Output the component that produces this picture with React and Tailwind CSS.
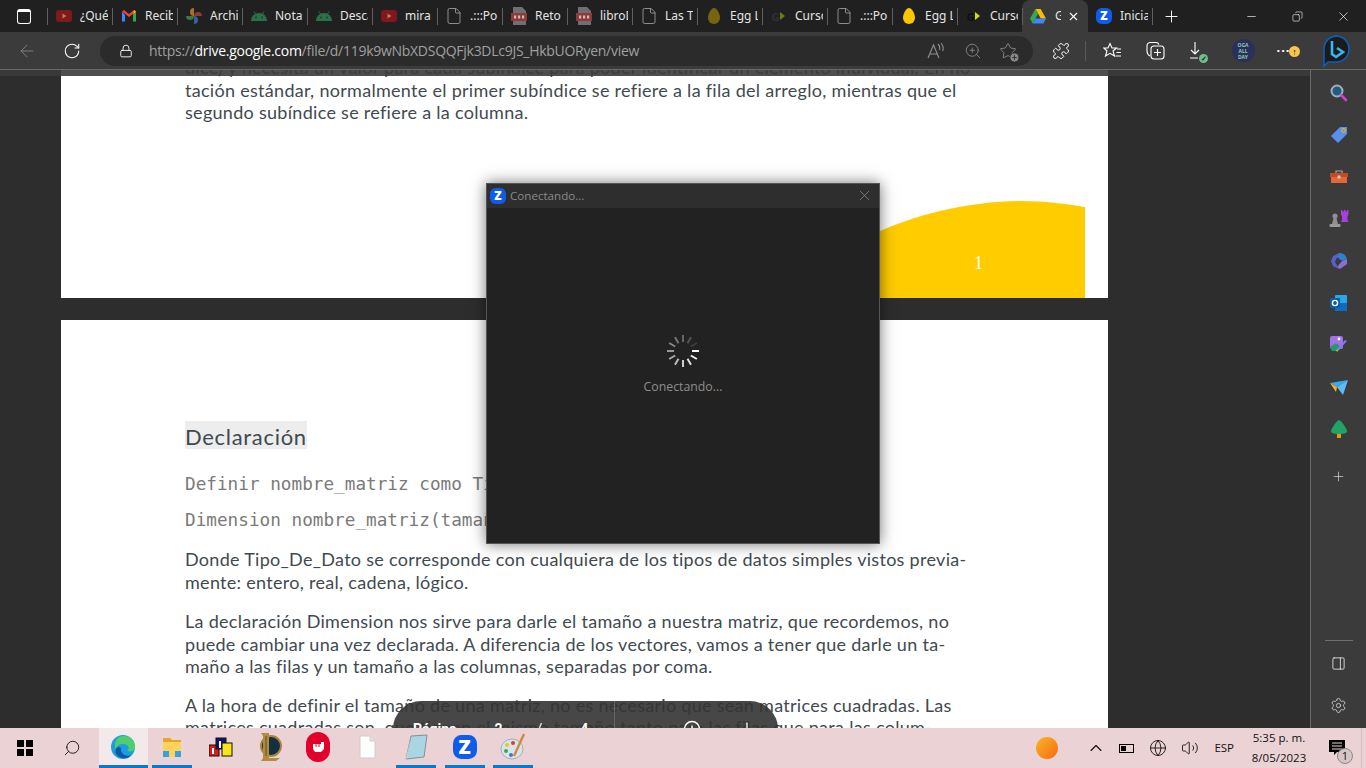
import React from 'react';
import {
  ArrowLeft, RotateCw, Lock, ZoomIn, Plus, X, Minus, Copy, Search, Puzzle, Settings,
  PanelRight, ChevronUp, Globe, Volume2, File, Star, PlusCircle,
} from 'lucide-react';

const YouTube = () => (
  <svg width="16" height="16" viewBox="0 0 16 16">
    <rect x="0" y="2" width="16" height="12" rx="3" fill="#7e1a1c" />
    <path d="M6.5 5.5 L10.5 8 L6.5 10.5 Z" fill="#c9706f" />
  </svg>
);
const Gmail = () => (
  <svg width="16" height="16" viewBox="0 0 16 16" fill="none">
    <path d="M1 3.5V13.5H4V7Z" fill="#4285f4" />
    <path d="M15 3.5V13.5H12V7Z" fill="#34a853" />
    <path d="M1 3.5 L8 9 L15 3.5 L13 2 L8 6 L3 2 Z" fill="#ea4335" />
    <path d="M13 2 L15 3.5 L12 7Z" fill="#fbbc04" />
  </svg>
);
const Photos = () => (
  <svg width="16" height="16" viewBox="0 0 16 16">
    <path d="M8 8 A4 4 0 0 1 8 0 Z" fill="#a9702a" />
    <path d="M8 8 A4 4 0 0 1 16 8 Z" fill="#8f3a30" />
    <path d="M8 8 A4 4 0 0 1 8 16 Z" fill="#34609c" />
    <path d="M8 8 A4 4 0 0 1 0 8 Z" fill="#37794a" />
  </svg>
);
const Android = () => (
  <svg width="18" height="16" viewBox="0 0 18 16">
    <path d="M1 13a8 8 0 0 1 16 0Z" fill="#2c7049" />
    <path d="M4 3.5 L5.8 6.5 M14 3.5 L12.2 6.5" stroke="#2c7049" strokeWidth="1" />
    <circle cx="6" cy="9.5" r="0.9" fill="#1d3a2a" />
    <circle cx="12" cy="9.5" r="0.9" fill="#1d3a2a" />
  </svg>
);
const Pdf = () => (
  <svg width="16" height="18" viewBox="0 0 16 18">
    <path d="M2 0H11L15 4V18H2Z" fill="#6f6f6f" />
    <rect x="0" y="6" width="16" height="8" fill="#8e3a3a" />
    <rect x="3" y="8.5" width="2.2" height="3" fill="#d7b5b5" />
    <rect x="7" y="8.5" width="2.2" height="3" fill="#d7b5b5" />
    <rect x="11" y="8.5" width="2.2" height="3" fill="#d7b5b5" />
  </svg>
);
const Egg = ({ dim }) => (
  <svg width="12" height="16" viewBox="0 0 12 16">
    <path d="M6 0C9 0 12 6 12 10A6 6 0 0 1 0 10C0 6 3 0 6 0Z" fill={dim ? '#75650f' : '#f7c800'} />
  </svg>
);
const Chevron = ({ dim }) => (
  <span className="flex items-center">
    <span className={`text-[11px] font-bold leading-none ${dim ? 'text-[#333]' : 'text-[#111]'}`}>G</span>
    <svg width="7" height="10" viewBox="0 0 7 10">
      <path d="M1 1 L6 5 L1 9 Z" fill={dim ? '#6f7a1a' : '#c6e01e'} />
    </svg>
  </span>
);
const Drive = () => (
  <svg width="16" height="15" viewBox="0 0 16 15">
    <path d="M5.4 0H10.6L16 9.5H10.8Z" fill="#fbbc04" />
    <path d="M5.4 0L0 9.5L2.6 14.5L8 5Z" fill="#34a853" />
    <path d="M5.3 9.5H16L13.4 14.5H2.6Z" fill="#4285f4" />
  </svg>
);
const ZoomLogo = ({ size = 16, text = 'text-[12px]' }) => (
  <span
    className={`flex items-center justify-center rounded-[35%] bg-[#0f5bea] text-white font-black leading-none ${text}`}
    style={{ width: size, height: size }}
  >
    Z
  </span>
);
const Doc = () => <File size={18} strokeWidth={1.2} className="text-[#9a9a9a]" />;

const tabs = [
  { icon: <YouTube />, label: '¿Qué' },
  { icon: <Gmail />, label: 'Recib' },
  { icon: <Photos />, label: 'Archi' },
  { icon: <Android />, label: 'Notas' },
  { icon: <Android />, label: 'Desca' },
  { icon: <YouTube />, label: 'mira d' },
  { icon: <Doc />, label: '.:::Por' },
  { icon: <Pdf />, label: 'Reto' },
  { icon: <Pdf />, label: 'libroD' },
  { icon: <Doc />, label: 'Las Tr' },
  { icon: <Egg dim />, label: 'Egg L' },
  { icon: <Chevron dim />, label: 'Curso' },
  { icon: <Doc />, label: '.:::Por' },
  { icon: <Egg />, label: 'Egg L' },
  { icon: <Chevron />, label: 'Curso' },
];

const Tab = ({ icon, label }) => (
  <div className="w-[65px] h-full flex items-center shrink-0 relative">
    <div className="w-[32px] flex justify-center shrink-0">{icon}</div>
    <span className="w-[28px] overflow-hidden whitespace-nowrap text-[12px] text-[#e4e4e4]">{label}</span>
    <div className="ml-auto w-px h-[17px] bg-[#5f5f5f]" />
  </div>
);

const TabBar = () => (
  <div className="h-[32px] bg-[#202020] flex items-stretch shrink-0">
    <div className="w-[47px] flex items-center justify-center">
      <div className="w-[14px] h-[15px] rounded-[3px] border-[1.5px] border-white border-t-[3px]" />
    </div>
    <div className="w-px h-[17px] self-center bg-[#5f5f5f]" />
    {tabs.map((t, i) => (
      <Tab key={i} icon={t.icon} label={t.label} />
    ))}
    <div className="w-[66px] -ml-px h-full bg-[#3b3b3b] rounded-t-lg flex items-center shrink-0">
      <div className="w-[31px] flex justify-center"><Drive /></div>
      <span className="ml-[2px] w-[6px] overflow-hidden text-[12px] text-[#e4e4e4]">G</span>
      <X size={13} className="ml-[6px] text-white" />
    </div>
    <Tab icon={<ZoomLogo />} label="Inicia" />
    <div className="w-[36px] flex items-center justify-center">
      <Plus size={19} strokeWidth={1.2} className="text-white" />
    </div>
    <div className="ml-auto flex">
      <div className="w-[46px] flex items-center justify-center"><Minus size={13} strokeWidth={1.2} className="text-white" /></div>
      <div className="w-[46px] flex items-center justify-center"><Copy size={11} strokeWidth={1.3} className="text-white -scale-x-100" /></div>
      <div className="w-[46px] flex items-center justify-center"><X size={15} strokeWidth={1.1} className="text-white" /></div>
    </div>
  </div>
);

const Badge = ({ bg, children }) => (
  <span className={`absolute -right-[3px] -bottom-[3px] w-[9px] h-[9px] rounded-full ${bg} flex items-center justify-center text-[7px] leading-none text-[#222] font-bold`}>
    {children}
  </span>
);

const ToolBar = () => (
  <div className="h-[38px] bg-[#3b3b3b] border-b border-[#6a6a6a] flex items-center shrink-0">
    <div className="w-[100px] flex items-center shrink-0 pl-[17px]">
      <ArrowLeft size={20} strokeWidth={1} className="text-[#8b8b8b]" />
      <RotateCw size={18} strokeWidth={1.4} className="ml-[26px] text-white" />
    </div>
    <div className="w-[933px] h-[30px] rounded-full bg-[#2b2b2b] flex items-center shrink-0">
      <Lock size={14} strokeWidth={1.5} className="ml-[19px] text-white" />
      <span className="ml-[16px] text-[14px] text-[#a0a0a0] whitespace-nowrap font-['Open_Sans',sans-serif] tracking-[-0.28px]">
        https://<span className="text-white">drive.google.com</span>/file/d/119k9wNbXDSQQFjk3DLc9JS_HkbUORyen/view
      </span>
      <div className="ml-auto flex items-center pr-[12px] text-[#8f8f8f]">
        <svg width="18" height="18" viewBox="0 0 18 18" fill="none" stroke="currentColor" strokeWidth="1.1">
          <path d="M1 16L6.5 3L12 16M3 12H10" />
          <path d="M11 2C13 4 13 6 12.6 8M14 1C16.5 4 16.5 7 15.6 9" />
        </svg>
        <ZoomIn size={18} strokeWidth={1.1} className="ml-[19px]" />
        <div className="relative ml-[17px] mr-[4px]">
          <Star size={18} strokeWidth={1.2} />
          <PlusCircle size={11} className="absolute -right-[3px] -bottom-[3px] fill-[#888] text-[#2b2b2b]" />
        </div>
      </div>
    </div>
    <div className="flex items-center text-white">
      <div className="w-[56px] flex justify-center"><Puzzle size={18} strokeWidth={1.3} /></div>
      <div className="w-[1px] h-[20px] -ml-[4px] bg-[#5a5a5a]" />
      <div className="w-[52px] flex justify-center">
        <svg width="19" height="17" viewBox="0 0 19 17" fill="none" stroke="#fff" strokeWidth="1.1">
          <path d="M7 1.5L9 6H13.5L10 9L11.5 14L7 11.3L2.5 14L4 9L.8 6H5Z" />
          <path d="M14 7H18M13.5 10.5H18M12.5 14H18" />
        </svg>
      </div>
      <div className="w-[34px] flex justify-center">
        <svg width="19" height="19" viewBox="0 0 19 19" fill="none" stroke="#fff" strokeWidth="1.1">
          <path d="M4 15C2 14 1 12 1 10V5C1 3 2.5 1.5 4.5 1.5H10C11.5 1.5 12.5 2.3 13 3.5" />
          <rect x="5" y="5" width="13" height="13" rx="3" />
          <path d="M11.5 8V15M8 11.5H15" />
        </svg>
      </div>
      <div className="w-[50px] flex justify-center">
        <div className="relative">
          <svg width="16" height="18" viewBox="0 0 16 18" fill="none" stroke="#fff" strokeWidth="1.1">
            <path d="M6 0V12M2 8L6 12L10 8M1 16H9" />
          </svg>
          <Badge bg="bg-[#6fbf8a]">✓</Badge>
        </div>
      </div>
      <div className="w-[42px] flex justify-center">
        <div className="w-[23px] h-[23px] rounded-full bg-[#2b2f5c] flex flex-col items-center justify-center text-[5px] leading-[6px] font-bold text-[#8fc7a8]">
          <span>OGA</span>
          <span>ALL</span>
          <span>DAY</span>
        </div>
      </div>
      <div className="w-[44px] flex justify-center">
        <div className="relative text-[13px] leading-none font-bold tracking-[1px] -mt-[6px] pr-[5px]">
          ...
          <span className="absolute -right-[5px] top-[5px] w-[11px] h-[11px] rounded-full bg-[#f5c451] text-[#222] text-[9px] leading-[11px] text-center">↑</span>
        </div>
      </div>
      <div className="w-[56px] flex justify-center">
        <svg width="30" height="34" viewBox="0 0 30 34" fill="none">
          <path d="M15 2a13 13 0 0 1 0 26H7L3 32V15A13 13 0 0 1 15 2Z" stroke="#0d5fb8" strokeWidth="1.6" fill="#1b1b1b" />
          <path d="M11 7V20L15 23L22 18L16 14" stroke="#38b6f2" strokeWidth="2.6" fill="none" />
        </svg>
      </div>
    </div>
  </div>
);

const Line = ({ children }) => <span className="block whitespace-nowrap">{children}</span>;

const Para = ({ lines, className = '' }) => (
  <p className={`mb-[17px] ${className}`}>
    {lines.map((l, i) => (
      <Line key={i}>{l}</Line>
    ))}
  </p>
);

const bodyText = "text-[18px] leading-[22.5px] tracking-[0.29px] text-[#3f4a50] font-['Lato',sans-serif]";

const PageOne = () => (
  <div className={`relative w-[1047px] h-[242px] -mt-[14px] ml-[61px] bg-white pl-[124px] ${bodyText}`}>
    <Para
      lines={[
        'dice) y necesita un valor para cada subíndice para poder identificar un elemento individual. En no-',
        'tación estándar, normalmente el primer subíndice se refiere a la fila del arreglo, mientras que el',
        'segundo subíndice se refiere a la columna.',
      ]}
    />
    <svg className="absolute right-[23px] bottom-0" width="240" height="97" viewBox="0 0 240 97">
      <path d="M0 48C60 12 130 0 175 0C200 0 222 3 240 6V97H0Z" fill="#ffcc00" />
    </svg>
    <span className="absolute left-[913px] bottom-[26px] text-[18px] leading-none tracking-normal text-white font-['Liberation_Serif',serif]">1</span>
  </div>
);

const PageTwo = () => (
  <div className={`w-[1047px] mt-[22px] ml-[61px] h-[500px] bg-white pl-[124px] pt-[101px] ${bodyText}`}>
    <h2 className="w-[122px] h-[28px] bg-[#eeeded] text-[22px] leading-[31px] tracking-[0.7px] font-normal">Declaración</h2>
    <div className="mt-[17px] mb-[10px] text-[17.7px] leading-[36px] tracking-normal text-[#7a7a7a] font-['DejaVu_Sans_Mono',monospace]">
      <Line>Definir nombre_matriz como Tipo_De_Dato</Line>
      <Line>Dimension nombre_matriz(tamaño_fila, tamaño_columna)</Line>
    </div>
    <Para
      lines={[
        'Donde Tipo_De_Dato se corresponde con cualquiera de los tipos de datos simples vistos previa-',
        'mente: entero, real, cadena, lógico.',
      ]}
    />
    <Para
      lines={[
        'La declaración Dimension nos sirve para darle el tamaño a nuestra matriz, que recordemos, no',
        'puede cambiar una vez declarada. A diferencia de los vectores, vamos a tener que darle un ta-',
        'maño a las filas y un tamaño a las columnas, separadas por coma.',
      ]}
    />
    <Para
      className="-mt-px"
      lines={[
        'A la hora de definir el tamaño de una matriz, no es necesario que sean matrices cuadradas. Las',
        'matrices cuadradas son, que tienen el mismo tamaño tanto para las filas que para las colum-',
      ]}
    />
  </div>
);

const Spinner = () => (
  <svg width="36" height="36" viewBox="-18 -18 36 36">
    {[1, 0.95, 0.85, 0.78, 0.7, 0.62, 0.54, 0.46, 0.38, 0.3, 0.22, 0.12].map((o, i) => (
      <line
        key={i}
        x1="9"
        y1="0"
        x2="16"
        y2="0"
        stroke="#fff"
        strokeWidth="2"
        opacity={o}
        transform={`rotate(${i * 30})`}
      />
    ))}
  </svg>
);

const ConnectingDialog = () => (
  <div className="absolute left-[486px] top-[113px] w-[394px] h-[361px] bg-[#222222] border border-[#555] shadow-[0_0_14px_rgba(0,0,0,0.55)] flex flex-col font-['Open_Sans',sans-serif]">
    <div className="h-[24px] bg-[#2e2e2e] flex items-center pl-[3px] pb-px shrink-0">
      <ZoomLogo size={16} />
      <span className="ml-[4px] text-[11.6px] text-[#8a8a8a]">Conectando...</span>
      <X size={17} strokeWidth={1} className="ml-auto mr-[6px] text-[#909090]" />
    </div>
    <div className="flex flex-col items-center pt-[125px]">
      <Spinner />
      <span className="mt-[9px] text-[12.3px] text-[#8d8d8d]">Conectando...</span>
    </div>
  </div>
);

const Pager = () => (
  <div className="absolute left-[393px] top-[631px] w-[385px] h-[56px] rounded-full bg-[#333333]/90 flex items-center text-white font-['Roboto',sans-serif] text-[14px] font-bold">
    <div className="w-[222px] h-full flex items-center border-r border-[#666] pl-[20px]">
      <span>Página</span>
      <span className="ml-[38px]">2</span>
      <span className="ml-[34px] font-normal">/</span>
      <span className="ml-[38px]">4</span>
    </div>
    <Minus size={20} strokeWidth={1.5} className="ml-[12px]" />
    <PlusCircle size={18} strokeWidth={2} className="ml-[36px]" />
    <Plus size={20} strokeWidth={1.5} className="ml-[36px]" />
  </div>
);

const sideIcons = [
  <svg width="18" height="18" viewBox="0 0 18 18" fill="none">
    <circle cx="7" cy="7" r="5.5" stroke="#9eb0bb" strokeWidth="2" fill="#245b7f" />
    <path d="M11.5 11.5L16 16" stroke="#d43fd0" strokeWidth="2.6" strokeLinecap="round" />
  </svg>,
  <svg width="18" height="18" viewBox="0 0 18 18">
    <path d="M10 1H17V8L8 17L1 10Z" fill="#5a8ff0" />
    <circle cx="13.5" cy="4.5" r="1.8" fill="none" stroke="#e6b11c" strokeWidth="1.2" />
  </svg>,
  <svg width="18" height="16" viewBox="0 0 18 16">
    <path d="M6 4V2H12V4" fill="none" stroke="#a8a8a8" strokeWidth="1.2" />
    <rect x="0" y="4" width="18" height="4" fill="#c44a24" />
    <rect x="1" y="8" width="16" height="6" fill="#e56636" />
    <rect x="7.5" y="6.5" width="3" height="3" fill="#c9c9c9" />
  </svg>,
  <svg width="20" height="20" viewBox="0 0 20 20">
    <circle cx="6" cy="7" r="2.6" fill="#8f8f8f" />
    <path d="M4.5 9H7.5L9 15H3Z" fill="#8f8f8f" />
    <rect x="0.5" y="15" width="11" height="3" rx="1" fill="#9a9a9a" />
    <path d="M12 1H13.5V2.5H15V1H16.5V2.5H18V1H19.5V5.5L18.5 7V11L19.5 13H12L13 11V7L12 5.5Z" fill="#a93fe0" />
  </svg>,
  <svg width="18" height="18" viewBox="0 0 18 18">
    <path d="M9 1A8 8 0 0 1 17 7L11 9L6 5Z" fill="#2f7fd6" />
    <path d="M17 7V12L10 17L7 15L12 9Z" fill="#8b6fd0" />
    <path d="M9 1L3 4L1 9L3 14L9 17L5 10Z" fill="#5a5fc9" />
    <path d="M7 5L12 9L7 12Z" fill="#3b3b3b" />
  </svg>,
  <svg width="18" height="18" viewBox="0 0 18 18">
    <rect x="5" y="1" width="12" height="16" rx="1" fill="#28a8ea" />
    <rect x="5" y="9" width="12" height="8" fill="#0f6cbd" />
    <rect x="0" y="4" width="10" height="10" rx="1" fill="#0a5ba8" />
    <circle cx="5" cy="9" r="2.6" fill="none" stroke="#fff" strokeWidth="1.4" />
  </svg>,
  <svg width="20" height="20" viewBox="0 0 20 20">
    <rect x="1" y="1" width="13" height="13" rx="2" fill="#a571e8" />
    <path d="M1 12L7 8L12 12L9 16H3Z" fill="#1f9d68" />
    <path d="M18 6L10 15L8 14L16 5Z" fill="#7b7bf0" />
    <path d="M10 14L8 17L7 15Z" fill="#f2b01e" />
    <circle cx="10" cy="4" r="1.4" fill="#fff" />
  </svg>,
  <svg width="18" height="15" viewBox="0 0 18 15">
    <path d="M0 3L18 0L7 7Z" fill="#3ca8f0" />
    <path d="M7 7L18 0L13 15Z" fill="#5fbdf5" />
    <path d="M0 3L7 7L6 12Z" fill="#f4b21b" />
  </svg>,
  <svg width="16" height="18" viewBox="0 0 16 18">
    <path d="M8 0C10 0 16 9 16 11C16 13 14 14 8 14C2 14 0 13 0 11C0 9 6 0 8 0Z" fill="#21a366" />
    <rect x="6" y="14" width="4" height="4" fill="#e89a12" />
  </svg>,
];

const SideBar = () => (
  <div className="w-[56px] shrink-0 bg-[#3b3b3b] border-l border-[#6a6a6a] flex flex-col items-center pt-[2px]">
    {sideIcons.map((icon, i) => (
      <div key={i} className="h-[42px] flex items-center justify-center">{icon}</div>
    ))}
    <div className="h-[52px] flex items-center justify-center">
      <Plus size={15} strokeWidth={1.1} className="text-[#dcdcdc]" />
    </div>
    <div className="mt-auto w-[28px] h-px bg-[#6f6f6f]" />
    <div className="h-[42px] mt-px flex items-center justify-center">
      <PanelRight size={15} strokeWidth={1.2} className="text-white" />
    </div>
    <div className="h-[42px] mb-[2px] flex items-center justify-center">
      <Settings size={17} strokeWidth={1.1} className="text-[#e4e4e4]" />
    </div>
  </div>
);

const taskIcons = [
  {
    active: true,
    line: true,
    icon: (
      <svg width="24" height="24" viewBox="0 0 24 24">
        <circle cx="12" cy="12" r="12" fill="#1b9de2" />
        <path d="M12 1A11 11 0 0 1 24 13C24 16 20 17 16 16C19 14 18 9 12 9C7 9 5 12 5 15C2 10 5 1 12 1Z" fill="#4fcf6b" />
        <path d="M10 13C9 18 14 22 20 20.5C17 24 9 25 5 19C3 15 6 10 10 13Z" fill="#0c59a4" />
      </svg>
    ),
  },
  {
    line: true,
    icon: (
      <svg width="22" height="22" viewBox="0 0 22 22">
        <path d="M2 2H9L11 4H20V8H2Z" fill="#e3a72b" />
        <rect x="2" y="6" width="18" height="15" fill="#ffd25c" />
        <rect x="2" y="15" width="18" height="6" fill="#2fa3e3" />
        <rect x="8" y="15" width="6" height="6" fill="#ffd25c" />
      </svg>
    ),
  },
  {
    icon: (
      <svg width="24" height="24" viewBox="0 0 24 24">
        <rect x="0" y="10" width="10" height="11" fill="#d81e1e" stroke="#111" />
        <rect x="7" y="3" width="10" height="11" fill="#12127a" stroke="#111" />
        <rect x="13" y="8" width="10" height="13" fill="#f7e51a" stroke="#111" />
        <rect x="10" y="6" width="2" height="7" fill="#fff" />
        <rect x="3" y="13" width="2" height="6" fill="#fff" />
      </svg>
    ),
  },
  {
    icon: (
      <svg width="24" height="30" viewBox="0 0 24 30">
        <circle cx="13" cy="14" r="10" fill="#14303f" stroke="#a9843f" strokeWidth="2" />
        <path d="M3 1H11V26H22L18 29H3L5 26V4Z" fill="#b08d45" />
        <path d="M8 4V24" stroke="#5f4a1c" strokeWidth="1" />
      </svg>
    ),
  },
  {
    icon: (
      <div className="w-[24px] h-[30px] rounded-full bg-[#e3002b] flex items-center justify-center">
        <svg width="13" height="13" viewBox="0 0 13 13">
          <path d="M1 4H9V2H12V9L9 12H3L1 9Z" fill="#fff" />
          <path d="M4 4V7M7 4V7" stroke="#e3002b" strokeWidth="1" />
        </svg>
      </div>
    ),
  },
  {
    icon: (
      <svg width="17" height="24" viewBox="0 0 17 24">
        <path d="M1 1H11L16 6V23H1Z" fill="#fdfdfd" stroke="#d0cccc" />
        <path d="M11 1V6H16" fill="#e6e2e2" stroke="#d0cccc" />
      </svg>
    ),
  },
  {
    line: true,
    icon: (
      <svg width="24" height="26" viewBox="0 0 24 26">
        <path d="M7 2L23 1L20 23L2 25Z" fill="#a9d6e2" stroke="#7d939b" />
        <path d="M7 2L3 24L2 25Z" fill="#dfe7ea" />
      </svg>
    ),
  },
  { line: true, icon: <ZoomLogo size={24} text="text-[20px]" /> },
  {
    line: true,
    icon: (
      <svg width="26" height="28" viewBox="0 0 26 28">
        <ellipse cx="12" cy="16" rx="11" ry="10" fill="#d9e4ea" stroke="#9fb1ba" />
        <circle cx="7" cy="12" r="2" fill="#e8c62c" />
        <circle cx="13" cy="10" r="2" fill="#d83b3b" />
        <circle cx="6" cy="18" r="2" fill="#3aa655" />
        <circle cx="11" cy="22" r="2" fill="#3a7bd5" />
        <path d="M24 1L14 23" stroke="#d28a3a" strokeWidth="2.4" />
      </svg>
    ),
  },
];

const TaskBar = () => (
  <div className="h-[40px] bg-[#ebd3d5] flex items-stretch shrink-0 font-['Open_Sans',sans-serif] text-[#111]">
    <div className="w-[50px] flex items-center justify-center">
      <div className="grid grid-cols-2 gap-[1.5px]">
        <span className="w-[7px] h-[7px] bg-black" />
        <span className="w-[7px] h-[7px] bg-black" />
        <span className="w-[7px] h-[7px] bg-black" />
        <span className="w-[7px] h-[7px] bg-black" />
      </div>
    </div>
    <div className="w-[44px] mr-[5px] flex items-center justify-center">
      <Search size={18} strokeWidth={1.2} className="-scale-x-100" />
    </div>
    {taskIcons.map((t, i) => (
      <div key={i} className={`w-[48.75px] flex flex-col items-center ${t.active ? 'bg-[#f4e9ea]' : ''}`}>
        <div className="flex-1 flex items-center justify-center">{t.icon}</div>
        <div className={`h-[3px] ${t.active ? 'w-full' : 'w-[40px]'} ${t.line ? 'bg-[#0b78d0]' : ''}`} />
      </div>
    ))}
    <div className="ml-auto flex items-center">
      <div className="w-[22px] h-[22px] rounded-full bg-gradient-to-br from-[#f9b32a] to-[#f4690d]" />
      <ChevronUp size={20} strokeWidth={1.3} className="ml-[28px]" />
      <div className="ml-[13px] flex items-center w-[15px] h-[9px] border-[1.2px] border-black p-px">
        <span className="w-[5px] h-full bg-black" />
      </div>
      <Globe size={18} strokeWidth={1.2} className="ml-[15px]" />
      <Volume2 size={18} strokeWidth={1.2} className="ml-[14px]" />
      <span className="ml-[15px] text-[11.5px]">ESP</span>
      <div className="ml-[8px] w-[74px] flex flex-col items-center text-[11.5px] leading-[20px]">
        <span>5:35 p. m.</span>
        <span>8/05/2023</span>
      </div>
      <div className="ml-[9px] w-[24px] flex justify-center relative">
        <svg width="17" height="16" viewBox="0 0 17 16">
          <path d="M0 0H16V12H8L5 15V12H0Z" fill="#000" />
          <path d="M3 3H13M3 6H13M3 9H13" stroke="#ebd3d5" />
        </svg>
        <span className="absolute left-[12px] top-[8px] w-[16px] h-[16px] rounded-full bg-[#d5c6c7] border border-[#888] text-[11px] leading-[14px] text-center">1</span>
      </div>
      <div className="ml-[12px] mr-[4px] h-full w-px bg-[#d2bcbe]" />
    </div>
  </div>
);

export default function App() {
  return (
    <div className="h-screen w-full flex flex-col overflow-hidden">
      <TabBar />
      <ToolBar />
      <div className="flex-1 min-h-0 flex">
        <div className="relative flex-1 overflow-hidden bg-[#2d2d2d]">
          <PageOne />
          <PageTwo />
          <div className="absolute inset-x-0 top-0 h-[6px] bg-[#3b3b3b]/90" />
          <ConnectingDialog />
          <Pager />
        </div>
        <SideBar />
      </div>
      <TaskBar />
    </div>
  );
}
